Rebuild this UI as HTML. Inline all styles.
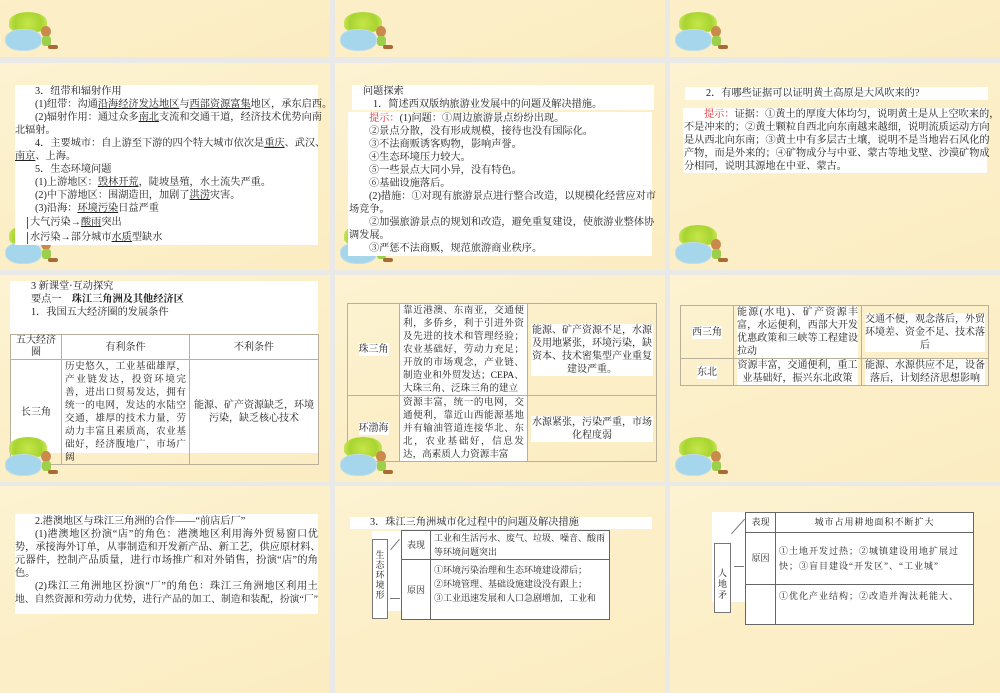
<!DOCTYPE html>
<html><head><meta charset="utf-8"><style>
*{margin:0;padding:0;box-sizing:border-box}
body{width:1000px;height:600px;overflow:hidden;background:#e9e9e7;position:relative;font-family:"Liberation Serif","Noto Serif CJK SC","Noto Sans CJK SC",serif;color:#222;font-size:10px}
.s{position:absolute;width:330px;height:207px;overflow:hidden;background:linear-gradient(160deg,#fdf3d2 0%,#fcefc8 50%,#fbecc2 100%)}
.w{position:absolute;background:#fff}
.l{position:absolute;white-space:nowrap;line-height:12px;font-size:10.2px}
.j{text-align:justify;text-align-last:justify}
.u{text-decoration:underline}
.r{color:#e02a2a}
.deco{position:absolute;left:5px;bottom:3px;width:56px;height:44px}
.pot{position:absolute;left:0;top:19px;width:37px;height:22px;background:#a6d6ec;border-radius:45%;border:1px solid #c0dde6}
.bush{position:absolute;left:4px;top:2px;width:38px;height:20px;background:radial-gradient(circle at 50% 60%,#c6e64a,#a8d430 60%,#d8ee70);border-radius:50% 50% 30% 30%}
.bear{position:absolute;left:36px;top:16px;width:10px;height:11px;background:#c98a4b;border-radius:50%}
.body2{position:absolute;left:37px;top:26px;width:9px;height:10px;background:#9cd04a;border-radius:3px}
.leg{position:absolute;left:43px;top:35px;width:10px;height:4px;background:#a86b34;border-radius:2px}
table{position:absolute;border-collapse:collapse;font-size:10px;line-height:13px}
td{border:1px solid #b8b09a;text-align:center;vertical-align:middle;padding:0 3px}
.wc{background:#fff;display:inline-block}
</style></head><body>

<div class="s" style="left:0;top:-150px"><div class="deco"><div class="bush"></div><div class="pot"></div><div class="bear"></div><div class="body2"></div><div class="leg"></div></div></div>
<div class="s" style="left:335px;top:-150px"><div class="deco"><div class="bush"></div><div class="pot"></div><div class="bear"></div><div class="body2"></div><div class="leg"></div></div></div>
<div class="s" style="left:670px;top:-150px"><div class="deco"><div class="bush"></div><div class="pot"></div><div class="bear"></div><div class="body2"></div><div class="leg"></div></div></div>

<div class="s" style="left:0;top:63px">
<div class="deco"><div class="bush"></div><div class="pot"></div><div class="bear"></div><div class="body2"></div><div class="leg"></div></div>
<div class="w" style="left:15px;top:22px;width:303px;height:160px"></div>
<div class="l" style="left:35px;top:23px">3．纽带和辐射作用</div>
<div class="l j" style="left:35px;top:36px;width:283px">(1)纽带：沟通<span class="u">沿海经济发达地区</span>与<span class="u">西部资源富集</span>地区，承东启西。</div>
<div class="l j" style="left:35px;top:49px;width:283px">(2)辐射作用：通过众多<span class="u">南北</span>支流和交通干道，经济技术优势向南</div>
<div class="l" style="left:15px;top:62px">北辐射。</div>
<div class="l j" style="left:35px;top:75px;width:283px">4．主要城市：自上游至下游的四个特大城市依次是<span class="u">重庆</span>、武汉、</div>
<div class="l" style="left:15px;top:88px"><span class="u">南京</span>、上海。</div>
<div class="l" style="left:35px;top:101px">5．生态环境问题</div>
<div class="l" style="left:35px;top:114px">(1)上游地区：<span class="u">毁林开荒</span>，陡坡垦殖，水土流失严重。</div>
<div class="l" style="left:35px;top:127px">(2)中下游地区：围湖造田，加剧了<span class="u">洪涝</span>灾害。</div>
<div class="l" style="left:35px;top:140px">(3)沿海：<span class="u">环境污染</span>日益严重</div>
<div class="l" style="left:27px;top:154px;border-left:1px solid #555;padding-left:2px">大气污染→<span class="u">酸雨</span>突出</div>
<div class="l" style="left:27px;top:169px;border-left:1px solid #555;padding-left:2px">水污染→部分城市<span class="u">水质</span>型缺水</div>
</div>

<div class="s" style="left:335px;top:63px">
<div class="deco"><div class="bush"></div><div class="pot"></div><div class="bear"></div><div class="body2"></div><div class="leg"></div></div>
<div class="w" style="left:17px;top:22px;width:302px;height:25px"></div>
<div class="w" style="left:13px;top:49px;width:304px;height:144px"></div>
<div class="l" style="left:28px;top:23px">问题探索</div>
<div class="l" style="left:38px;top:36px">1．简述西双版纳旅游业发展中的问题及解决措施。</div>
<div class="l" style="left:34px;top:50px"><span class="r">提示：</span>(1)问题：①周边旅游景点纷纷出现。</div>
<div class="l" style="left:34px;top:63px">②景点分散，没有形成规模，接待也没有国际化。</div>
<div class="l" style="left:34px;top:76px">③不法商贩诱客购物，影响声誉。</div>
<div class="l" style="left:34px;top:89px">④生态环境压力较大。</div>
<div class="l" style="left:34px;top:102px">⑤一些景点大同小异，没有特色。</div>
<div class="l" style="left:34px;top:115px">⑥基础设施落后。</div>
<div class="l j" style="left:34px;top:128px;width:283px">(2)措施：①对现有旅游景点进行整合改造，以规模化经营应对市</div>
<div class="l" style="left:14px;top:141px">场竞争。</div>
<div class="l j" style="left:34px;top:154px;width:283px">②加强旅游景点的规划和改造，避免重复建设，使旅游业整体协</div>
<div class="l" style="left:14px;top:167px">调发展。</div>
<div class="l" style="left:34px;top:180px">③严惩不法商贩，规范旅游商业秩序。</div>
</div>

<div class="s" style="left:670px;top:63px">
<div class="deco"><div class="bush"></div><div class="pot"></div><div class="bear"></div><div class="body2"></div><div class="leg"></div></div>
<div class="w" style="left:15px;top:24px;width:303px;height:13px"></div>
<div class="w" style="left:13px;top:45px;width:304px;height:65px"></div>
<div class="l" style="left:36px;top:25px">2．有哪些证据可以证明黄土高原是大风吹来的?</div>
<div class="l j" style="left:34px;top:46px;width:283px"><span class="r">提示：</span>证据：①黄土的厚度大体均匀，说明黄土是从上空吹来的，</div>
<div class="l j" style="left:14px;top:59px;width:303px">不是冲来的；②黄土颗粒自西北向东南越来越细，说明流质运动方向</div>
<div class="l j" style="left:14px;top:72px;width:303px">是从西北向东南；③黄土中有多层古土壤，说明不是当地岩石风化的</div>
<div class="l j" style="left:14px;top:85px;width:303px">产物，而是外来的；④矿物成分与中亚、蒙古等地戈壁、沙漠矿物成</div>
<div class="l" style="left:14px;top:98px">分相同，说明其源地在中亚、蒙古。</div>
</div>

<div class="s" style="left:0;top:275px">
<div class="w" style="left:10px;top:6px;width:308px;height:172px"></div>
<div class="l" style="left:31px;top:6px">3 新课堂·互动探究</div>
<div class="l" style="left:31px;top:19px">要点一　<b>珠江三角洲及其他经济区</b></div>
<div class="l" style="left:31px;top:32px">1．我国五大经济圈的发展条件</div>
<table style="left:10px;top:59px;width:309px">
<tr style="height:25px"><td style="width:51px;line-height:12px">五大经济圈</td><td style="width:128px">有利条件</td><td>不利条件</td></tr>
<tr style="height:93px"><td>长三角</td><td style="text-align:justify;font-size:9.6px">历史悠久，工业基础雄厚，产业链发达，投资环境完善，进出口贸易发达，拥有统一的电网，发达的水陆空交通，雄厚的技术力量，劳动力丰富且素质高，农业基础好，经济腹地广，市场广阔</td><td>能源、矿产资源缺乏，环境污染，缺乏核心技术</td></tr>
</table>
<div class="deco"><div class="bush"></div><div class="pot"></div><div class="bear"></div><div class="body2"></div><div class="leg"></div></div>
</div>

<div class="s" style="left:335px;top:275px">
<table style="left:12px;top:28px;width:310px">
<tr style="height:91px"><td style="width:52px"><span class="wc">珠三角</span></td><td style="width:128px;background:#fff;text-align:justify;font-size:9.6px">靠近港澳、东南亚，交通便利，多侨乡，利于引进外资及先进的技术和管理经验；农业基础好，劳动力充足；开放的市场观念，产业链、制造业和外贸发达；CEPA、大珠三角、泛珠三角的建立</td><td><span class="wc">能源、矿产资源不足，水源及用地紧张，环境污染，缺资本、技术密集型产业重复建设严重。</span></td></tr>
<tr style="height:66px"><td><span class="wc">环渤海</span></td><td style="background:#fff;text-align:justify;font-size:9.6px">资源丰富，统一的电网，交通便利，靠近山西能源基地并有输油管道连接华北、东北，农业基础好，信息发达，高素质人力资源丰富</td><td><span class="wc">水源紧张，污染严重，市场化程度弱</span></td></tr>
</table>
<div class="deco"><div class="bush"></div><div class="pot"></div><div class="bear"></div><div class="body2"></div><div class="leg"></div></div>
</div>

<div class="s" style="left:670px;top:275px">
<div class="deco"><div class="bush"></div><div class="pot"></div><div class="bear"></div><div class="body2"></div><div class="leg"></div></div>
<table style="left:10px;top:30px;width:309px">
<tr style="height:39px"><td style="width:53px"><span class="wc">西三角</span></td><td style="width:128px;text-align:justify"><span class="wc">能源(水电)、矿产资源丰富，水运便利，西部大开发优惠政策和三峡等工程建设拉动</span></td><td><span class="wc">交通不便，观念落后，外贸环境差、资金不足、技术落后</span></td></tr>
<tr style="height:26px"><td><span class="wc">东北</span></td><td><span class="wc">资源丰富，交通便利，重工业基础好，振兴东北政策</span></td><td><span class="wc">能源、水源供应不足，设备落后，计划经济思想影响</span></td></tr>
</table>
</div>

<div class="s" style="left:0;top:486px">
<div class="w" style="left:15px;top:28px;width:303px;height:100px"></div>
<div class="l" style="left:35px;top:30px">2.港澳地区与珠江三角洲的合作——“前店后厂”</div>
<div class="l j" style="left:35px;top:43px;width:283px">(1)港澳地区扮演“店”的角色：港澳地区利用海外贸易窗口优</div>
<div class="l j" style="left:15px;top:56px;width:303px">势，承接海外订单，从事制造和开发新产品、新工艺，供应原材料、</div>
<div class="l j" style="left:15px;top:69px;width:303px">元器件，控制产品质量，进行市场推广和对外销售，扮演“店”的角</div>
<div class="l" style="left:15px;top:82px">色。</div>
<div class="l j" style="left:35px;top:95px;width:283px">(2)珠江三角洲地区扮演“厂”的角色：珠江三角洲地区利用土</div>
<div class="l j" style="left:15px;top:108px;width:303px;font-size:9.8px">地、自然资源和劳动力优势，进行产品的加工、制造和装配，扮演“厂”</div>
</div>

<div class="s" style="left:335px;top:486px">
<div class="w" style="left:15px;top:31px;width:302px;height:12px"></div>
<div class="l" style="left:35px;top:31px">3．珠江三角洲城市化过程中的问题及解决措施</div>
<div class="w" style="left:37px;top:45px;width:30px;height:80px"></div>
<div style="position:absolute;left:37px;top:53px;width:16px;height:80px;border:1px solid #777;background:#fff;font-size:9px;line-height:10px;text-align:center;padding-top:10px">生<br>态<br>环<br>境<br>形</div>
<div style="position:absolute;left:53px;top:58px;width:14px;height:1px;background:#777;transform:rotate(-50deg)"></div>
<div style="position:absolute;left:55px;top:112px;width:10px;height:1px;background:#777"></div>
<table style="left:66px;top:44px;width:209px;background:#fff;font-size:9px;line-height:14px;border:1px solid #666">
<tr style="height:29px"><td style="width:29px;border-color:#666">表现</td><td style="text-align:left;border-color:#666">工业和生活污水、废气、垃圾、噪音、酸雨等环境问题突出</td></tr>
<tr style="height:60px"><td style="border-color:#666">原因</td><td style="text-align:left;vertical-align:top;border-color:#666;padding-top:3px">①环境污染治理和生态环境建设滞后；<br>②环境管理、基础设施建设没有跟上；<br>③工业迅速发展和人口急剧增加，工业和</td></tr>
</table>
</div>

<div class="s" style="left:670px;top:486px">
<div class="w" style="left:42px;top:26px;width:33px;height:90px"></div>
<div style="position:absolute;left:44px;top:57px;width:17px;height:70px;border:1px solid #777;background:#fff;font-size:9px;line-height:11px;text-align:center;padding-top:24px">人<br>地<br>矛</div>
<div style="position:absolute;left:58px;top:40px;width:20px;height:1px;background:#777;transform:rotate(-48deg)"></div>
<div style="position:absolute;left:64px;top:80px;width:10px;height:1px;background:#777"></div>
<table style="left:75px;top:26px;width:229px;background:#fff;font-size:9px;line-height:15px;border:1px solid #666">
<tr style="height:20px"><td style="width:30px;border-color:#666">表现</td><td style="border-color:#666;letter-spacing:1px">城市占用耕地面积不断扩大</td></tr>
<tr style="height:52px"><td style="border-color:#666">原因</td><td style="text-align:left;border-color:#666;letter-spacing:1px">①土地开发过热；②城镇建设用地扩展过快；③盲目建设“开发区”、“工业城”</td></tr>
<tr style="height:40px"><td style="border-color:#666"></td><td style="text-align:left;vertical-align:top;border-color:#666;letter-spacing:1px;padding-top:4px">①优化产业结构；②改造并淘汰耗能大、</td></tr>
</table>
</div>

</body></html>
